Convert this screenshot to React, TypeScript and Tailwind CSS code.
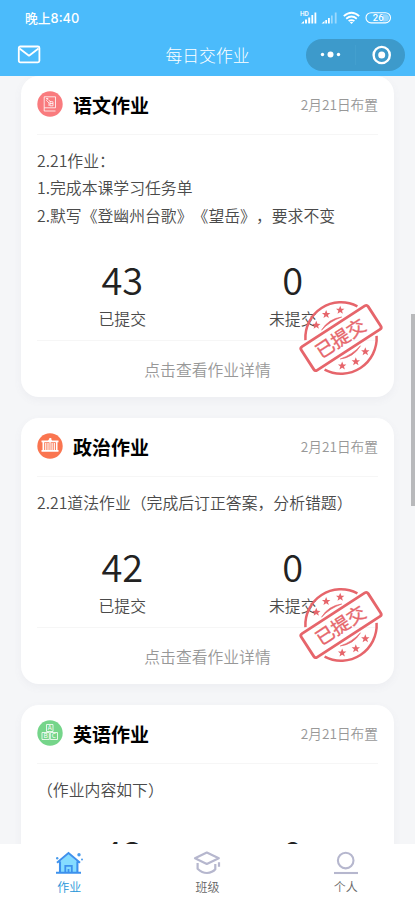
import React from 'react';

const STAR = 'M0 -4.4L1.2 -1.4L4.2 -1.3L1.8 0.7L2.7 3.6L0 1.9L-2.7 3.6L-1.8 0.7L-4.2 -1.3L-1.2 -1.4Z';

function Stamp() {
  return (
    <svg className="absolute right-[9px] bottom-[16px] h-[86px] w-[88px]" viewBox="-44 -43 88 86">
      <g transform="rotate(-33)" fill="none" stroke="#e6656b" strokeWidth="2.5">
        <path d="M-31 -17.6A35.6 35.6 0 0 1 31 -17.6" />
        <path d="M-31 17.6A35.6 35.6 0 0 0 31 17.6" />
        <path d="M-12 -17.2Q0 -23 12 -17.2Q0 -20.2 -12 -17.2Z" strokeWidth=".6" fill="#e6656b" />
        <path d="M-12 17.2Q0 23 12 17.2Q0 20.2 -12 17.2Z" strokeWidth=".6" fill="#e6656b" />
        <rect x="-39.9" y="-14" width="79.8" height="28" rx="2.5" strokeWidth="2.8" />
        <g fill="#e6656b" stroke="none">
          <path transform="translate(-13.8 -24.2) rotate(33)" d={STAR} />
          <path transform="translate(.4 -27.9) rotate(33)" d={STAR} />
          <path transform="translate(14.5 -23.8) rotate(33)" d={STAR} />
          <path transform="translate(-14.2 24) rotate(33)" d={STAR} />
          <path transform="translate(-.4 27.8) rotate(33)" d={STAR} />
          <path transform="translate(13 24.6) rotate(33)" d={STAR} />
        </g>
        <text x="-.5" y="6.8" textAnchor="middle" fill="#e6656b" stroke="#e6656b" strokeWidth=".35" fontSize="18.5" fontWeight="400">已提交</text>
      </g>
    </svg>
  );
}

function BookIcon() {
  return (
    <svg className="size-[26px]" viewBox="0 0 26 26" fill="none" stroke="#fff" strokeWidth=".8">
      <circle cx="13" cy="13" r="12.7" fill="#f97b7e" stroke="none" />
      <path d="M7.2 5.8H18.5V16.8H7.2ZM7.2 16.8V20H18.5" />
      <path d="M9 7.5H11L9.5 9.5L12 12V15M11.5 9L13.5 10.5M13 10.5V14.8H16V10.8ZM13 12.5H16" strokeWidth=".75" />
    </svg>
  );
}

function HallIcon() {
  return (
    <svg className="size-[26px]" viewBox="0 0 26 26" fill="#fff">
      <circle cx="13" cy="13" r="12.7" fill="#fa7550" />
      <path d="M4.5 7.5H11L12.3 6V5H14.3V6.3L15 7.5H21.5V9.3H4.5ZM5.5 9H7.2V17H5.5ZM8.2 10H9.4V17H8.2ZM10.4 10H11.6V17H10.4ZM12.5 9H13.6V17H12.5ZM14.5 10H15.7V17H14.5ZM16.7 10H17.9V17H16.7ZM18.9 9H20.5V17H18.9ZM4.5 17H21.5V18.8H4.5Z" />
    </svg>
  );
}

function BlocksIcon() {
  return (
    <svg className="size-[26px]" viewBox="0 0 26 26" fill="none" stroke="#fff" strokeWidth=".8">
      <circle cx="13" cy="13" r="12.7" fill="#75d58a" stroke="none" />
      <path d="M9.5 4.5H16V11.5H9.5ZM5 12.5H12.3V19.5H5ZM13.3 12.5H20.5V19.5H13.3Z" />
      <g fill="#fff" stroke="none" fontSize="6.5" fontWeight="400" textAnchor="middle">
        <text x="12.8" y="10.4">A</text>
        <text x="8.7" y="18.4">B</text>
        <text x="16.9" y="18.4">C</text>
      </g>
    </svg>
  );
}

type CardProps = {
  icon: React.ReactNode;
  title: string;
  lines: string[];
  done: string;
  stamped?: boolean;
};

function Card({ icon, title, lines, done, stamped }: CardProps) {
  return (
    <section className="relative shrink-0 rounded-[18px] bg-white px-4 shadow-[0_3px_8px_rgba(100,110,130,0.06)]">
      <header className="flex h-[59px] items-center border-b border-[#f6f6f6] pb-px">
        <div className="pb-[2px]">{icon}</div>
        <h2 className="ml-[10px] flex-1 text-[19px] leading-none font-bold text-black">{title}</h2>
        <time className="text-[13.7px] font-[350] text-[#989898]">2月21日布置</time>
      </header>
      <div className="pt-[11.5px] text-[15.85px] leading-[27.5px] font-[350] whitespace-nowrap text-[#4a4a4a] [text-spacing-trim:space-all]">
        {lines.map((line) => <p key={line}>{line}</p>)}
      </div>
      <div className="mt-[25px] grid h-[84px] grid-cols-2 text-center">
        {[[done, '已提交'], ['0', '未提交']].map(([value, label]) => (
          <div key={label}>
            <div className="h-[52px] text-[38px] leading-[50px] font-[350] text-[#222]">{value}</div>
            <div className="text-[15.8px] leading-[26px] font-[350] text-[#4a4a4a]">{label}</div>
          </div>
        ))}
      </div>
      <footer className="mt-[2px] flex h-[57px] items-center justify-center border-t border-[#f6f6f6] pt-px text-[15.8px] font-[350] text-[#989898]">
        点击查看作业详情
      </footer>
      {stamped && <Stamp />}
    </section>
  );
}

function StatusIcons() {
  return (
    <svg className="h-[16px] w-[94px]" viewBox="0 0 94 16" fill="#fff">
      <text x="0" y="5.8" fontSize="6.5" fontWeight="500" fontFamily="Roboto">HD</text>
      <path d="M1 13.5L4 11V13.5ZM5 9.5H7V13.5H5ZM8.2 7.5H10.2V13.5H8.2ZM11.4 5H13.2V13.5H11.4ZM14.5 2.5H16.3V13.5H14.5Z" />
      <path d="M21.5 13.5L24.5 11V13.5ZM25.3 10H27V13.5H25.3ZM28 8H29.8V13.5H28Z" />
      <path d="M31 5.5H32.7V13.5H31ZM34.8 2.5H36.6V13.5H34.8Z" opacity=".45" />
      <g fill="none" stroke="#fff" strokeWidth="1.8">
        <path d="M43.8 6.2Q51.5 -.8 59.2 6.2M46.2 8.7Q51.5 4.2 56.8 8.7M48.6 11.1Q51.5 9 54.4 11.1" />
      </g>
      <path d="M49.8 12.3Q51.5 11 53.2 12.3L51.5 14Z" />
      <rect x="66" y="2.7" width="24.5" height="10.2" rx="5.1" fill="none" stroke="#fff" strokeWidth="1.1" />
      <path d="M83 4.2H85.4A3.6 3.6 0 0 1 85.4 11.4H83Z" opacity=".4" />
      <text x="78.2" y="11.2" textAnchor="middle" fontSize="9.5" fontWeight="500" fontFamily="Roboto">26</text>
    </svg>
  );
}

function HomeIcon() {
  return (
    <svg className="h-[24px] w-[30px]" viewBox="0 0 30 24" fill="none" stroke="#3d91ed" strokeWidth="2.1">
      <path d="M5.5 11L14.5 3L23.5 11V21.5H5.5Z" fill="#85dcff" stroke="none" />
      <path d="M3 11.7L14.5 2L26 11.7M6 10.5V21M23.4 10.5V21M2 21.7H27" />
      <path d="M11.3 21V14.8H17.8V21M14.5 18V21" strokeWidth="1.8" />
      <g fill="#4b9cec" stroke="none"><circle cx="25" cy="3.8" r="1.7" /><circle cx="3.2" cy="7.3" r="1.2" /><circle cx="28" cy="8.4" r="1" /></g>
    </svg>
  );
}

function ClassIcon() {
  return (
    <svg className="h-[24px] w-[30px]" viewBox="0 0 30 24" fill="none" stroke="#b6b7ce" strokeWidth="2.2" strokeLinejoin="round">
      <path d="M3 7.3L14.8 1.5L26.8 7.3L14.8 13Z" />
      <path d="M5.6 12V17.8Q10 22 15 22Q20.5 21.5 23.3 18.2V13M27 11.2V15.8" />
    </svg>
  );
}

function PersonIcon() {
  return (
    <svg className="h-[24px] w-[30px]" viewBox="0 0 30 24" fill="none" stroke="#b6b7ce" strokeWidth="2.1">
      <circle cx="14.7" cy="9.6" r="7.8" />
      <path d="M3 22H27" />
    </svg>
  );
}

export default function App() {
  return (
    <div className="relative flex h-[900px] w-[415px] flex-col overflow-hidden bg-[#f5f6f8] font-['Noto_Sans_CJK_SC',sans-serif]">
      <div className="z-10 h-[76px] shrink-0 bg-[#4bbbfb] text-white">
        <div className="flex h-[36px] items-center justify-between pr-[21px] pl-[25px]">
          <span className="text-[12.8px] font-medium">晚上<span className="font-['Inter']">8:40</span></span>
          <StatusIcons />
        </div>
        <div className="grid h-[37px] grid-cols-3 items-center">
          <svg className="ml-[17px] h-[19px] w-[24px]" viewBox="0 0 24 19" fill="none" stroke="#fff" strokeWidth="1.8" strokeLinejoin="round">
            <rect x="1.8" y="1.5" width="20.6" height="15.8" rx="1.5" />
            <path d="M2.5 3.5L12 10.7L21.5 3.5" />
          </svg>
          <h1 className="text-center text-[16.8px] leading-[36px] font-light">每日交作业</h1>
          <div className="mr-[10px] flex h-[32px] w-[99px] items-center justify-self-end rounded-full bg-[#3d9acb]">
            <svg className="h-[32px] w-[99px]" viewBox="0 0 99 32" fill="#fff">
              <circle cx="16.5" cy="15.5" r="1.7" /><circle cx="24.5" cy="15.5" r="3" /><circle cx="32.5" cy="15.5" r="1.7" />
              <path d="M49.5 6V26" stroke="#439fce" strokeWidth="1" />
              <circle cx="75.7" cy="16" r="8.1" fill="none" stroke="#fff" strokeWidth="2.4" /><circle cx="75.7" cy="16" r="3.5" />
            </svg>
          </div>
        </div>
      </div>
      <main className="flex min-h-0 flex-1 flex-col gap-[21px] overflow-hidden px-[21px]">
        <Card icon={<BookIcon />} title="语文作业" lines={['2.21作业：', '1.完成本课学习任务单', '2.默写《登幽州台歌》《望岳》，要求不变']} done="43" stamped />
        <Card icon={<HallIcon />} title="政治作业" lines={['2.21道法作业（完成后订正答案，分析错题）']} done="42" stamped />
        <Card icon={<BlocksIcon />} title="英语作业" lines={['（作业内容如下）']} done="43" />
      </main>
      <nav className="z-10 grid h-[56px] shrink-0 grid-cols-3 bg-white text-[12px] font-[350] text-[#666]">
        <div className="flex flex-col items-center pt-[7px] leading-[24px] text-[#2595d8]"><HomeIcon /><span>作业</span></div>
        <div className="flex flex-col items-center pt-[7px] leading-[24px]"><ClassIcon /><span>班级</span></div>
        <div className="flex flex-col items-center pt-[7px] leading-[24px]"><PersonIcon /><span>个人</span></div>
      </nav>
      <div className="absolute top-[314px] right-0 h-[192px] w-[4px] bg-[#b8b9bb]" />
    </div>
  );
}
